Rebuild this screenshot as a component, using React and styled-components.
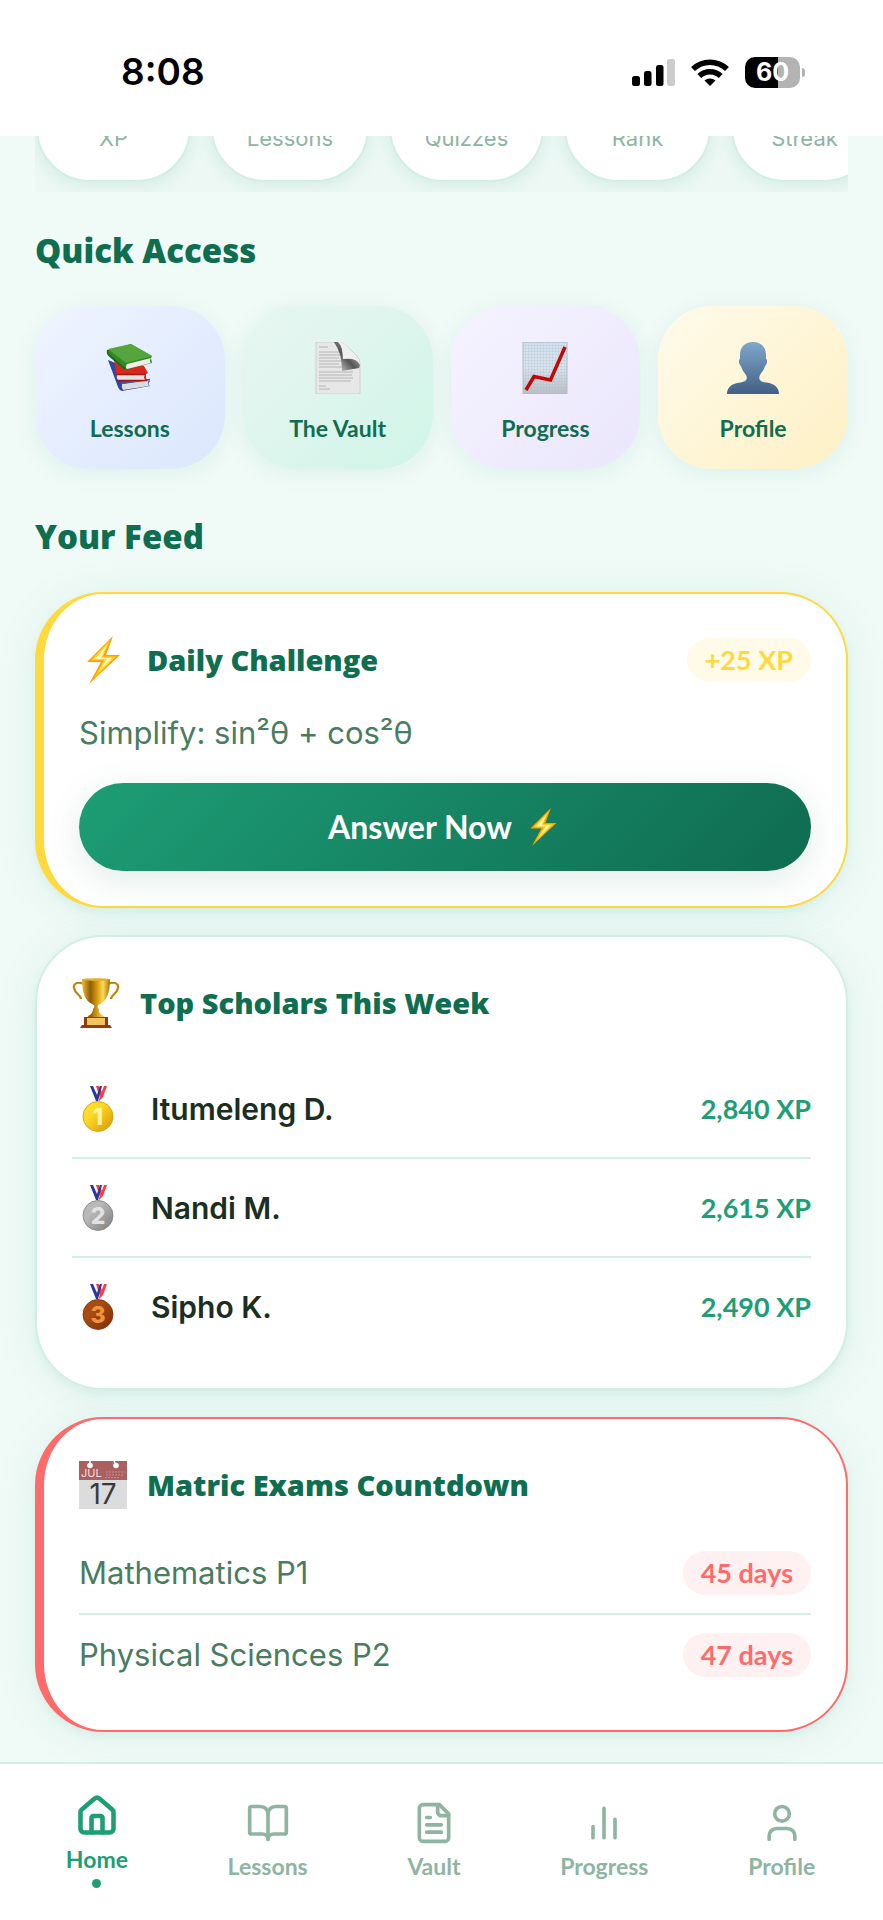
import React from "react";
import styled, { createGlobalStyle, css } from "styled-components";

const c = {
  deep: "#0f6e50",
  green: "#1d9e75",
  muted: "#8fb5a2",
  body: "#4a7c5f",
  ink: "#1a2e22",
  line: "#d2efe5",
  page: "#f0faf7",
  gold: "#ffd93d",
  coral: "#ff6b6b",
};
const display = `"Open Sans", Lato, sans-serif`;
const round = `Lato, "Open Sans", sans-serif`;
const plain = `Inter, "Liberation Sans", sans-serif`;

const Global = createGlobalStyle`
  *, *::before, *::after { box-sizing: border-box; }
  body { margin: 0; background: ${c.page}; font-family: ${plain}; }
  h2, h3, p, ul, ol { margin: 0; padding: 0; }
  ul, ol { list-style: none; }
  svg { display: block; flex: none; }
`;

const Screen = styled.div`
  display: flex;
  flex-direction: column;
  min-height: 100vh;
`;

const StatusBar = styled.header`
  display: flex;
  align-items: center;
  justify-content: space-between;
  height: 136px;
  padding: 8px 78px 0 121px;
  background: #fff;
`;
const Clock = styled.time`
  font-size: 37px;
  line-height: 48px;
  font-weight: 600;
  color: #000;
`;
const StatusIcons = styled.div`
  display: flex;
  align-items: center;
  gap: 16px;
`;
const Battery = styled.div`
  display: flex;
  align-items: center;
  gap: 2px;
  &::after {
    content: "";
    width: 3px;
    height: 9px;
    border-radius: 0 4px 4px 0;
    background: #b3b3b3;
  }
`;
const BatteryLevel = styled.span`
  width: 55px;
  height: 31px;
  border-radius: 10px;
  background: linear-gradient(90deg, #000 60%, #b3b3b3 60%);
  color: #fff;
  font-size: 25px;
  line-height: 31px;
  font-weight: 700;
  text-align: center;
`;

const Content = styled.main`
  flex: 1;
  padding: 0 35px 30px;
`;

const Stats = styled.ul`
  display: flex;
  align-items: flex-end;
  gap: 20px;
  height: 56px;
  padding: 0 0 10px 1px;
  overflow: hidden;
  background: #edf8f5;
`;
const StatChip = styled.li`
  flex: none;
  width: ${(p) => p.$width}px;
  height: 128px;
  padding: 70px 0 0;
  border: 2px solid ${c.line};
  border-radius: 54px;
  background: #fff;
  box-shadow: 0 4px 18px rgba(29, 158, 117, 0.12);
  color: ${c.muted};
  font-size: 22px;
  line-height: 24px;
  text-align: center;
`;

const SectionTitle = styled.h2`
  padding: ${(p) => (p.$first ? "35px" : "44px")} 0 31px;
  color: ${c.deep};
  font: 800 33px/48px ${display};
`;

const QuickGrid = styled.nav`
  display: grid;
  grid-template-columns: repeat(4, 1fr);
  gap: 18px;
`;
const QuickCard = styled.a`
  display: flex;
  flex-direction: column;
  align-items: center;
  gap: 20px;
  height: 163px;
  padding-top: 36px;
  border-radius: 54px;
  background: linear-gradient(135deg, ${(p) => p.$from}, ${(p) => p.$to});
  box-shadow: 0 4px 22px rgba(29, 158, 117, 0.09);
  color: ${c.deep};
  font: 700 23px/28px ${round};
  text-decoration: none;
`;

const Feed = styled.div`
  display: flex;
  flex-direction: column;
  gap: 27px;
`;
const Card = styled.section`
  padding: 35px;
  border: 2px solid ${(p) => p.$accent || c.line};
  border-left-width: ${(p) => (p.$accent ? 9 : 2)}px;
  border-radius: 68px;
  background: #fff;
  box-shadow: 0 4px 45px rgba(29, 158, 117, 0.08), 0 4px 9px rgba(29, 158, 117, 0.07);
`;
const CardHead = styled.div`
  display: flex;
  align-items: center;
  gap: 20px;
  height: 62px;
  margin-bottom: ${(p) => p.$space || 17}px;
`;
const CardTitle = styled.h3`
  flex: 1;
  color: ${c.deep};
  font: 800 29px/42px ${display};
`;
const Pill = styled.span`
  padding: 0 18px;
  border-radius: 22px;
  font: 700 27px/44px ${round};
  white-space: nowrap;
  ${(p) =>
    p.$tone === "gold"
      ? css`
          background: #fffbe8;
          color: ${c.gold};
        `
      : css`
          background: #fff1f1;
          color: ${c.coral};
        `}
`;
const Question = styled.p`
  color: ${c.body};
  font-size: 31px;
  line-height: 50px;
`;
const AnswerButton = styled.button`
  display: flex;
  align-items: center;
  justify-content: center;
  gap: 12px;
  width: 100%;
  height: 88px;
  margin-top: 25px;
  border: 0;
  border-radius: 44px;
  background: linear-gradient(135deg, ${c.green}, #0f6b50);
  box-shadow: 0 9px 36px rgba(15, 110, 80, 0.13);
  color: #fff;
  font: 700 32px/42px ${round};
`;

const ScholarRow = styled.li`
  display: flex;
  align-items: center;
  height: 99px;
  border-bottom: 2px solid ${c.line};
  &:last-child {
    height: 97px;
    margin-bottom: -2px;
    border: 0;
  }
`;
const Medal = styled.span`
  display: flex;
  justify-content: center;
  width: 52px;
  margin-right: 27px;
`;
const ScholarName = styled.span`
  flex: 1;
  color: ${c.ink};
  font-size: 30px;
  line-height: 48px;
  font-weight: 600;
`;
const ScholarXp = styled.span`
  color: ${c.green};
  font: 700 27px/36px ${round};
`;

const ExamRow = styled.li`
  display: flex;
  align-items: center;
  justify-content: space-between;
  padding: 18px 0;
  border-bottom: 2px solid ${c.line};
  color: ${c.body};
  font-size: 31px;
  line-height: 44px;
  &:last-child {
    border: 0;
  }
`;

const TabBar = styled.nav`
  display: flex;
  align-items: center;
  justify-content: space-around;
  height: 158px;
  padding: 0 18px 3px 16px;
  border-top: 2px solid ${c.line};
  background: #fff;
`;
const Tab = styled.a`
  display: flex;
  flex-direction: column;
  align-items: center;
  color: ${(p) => (p.$active ? c.green : c.muted)};
  font: 700 23px/28px ${round};
  text-decoration: none;
  svg {
    margin-bottom: 7px;
  }
  &::after {
    content: "";
    display: ${(p) => (p.$active ? "block" : "none")};
    width: 9px;
    height: 9px;
    margin-top: 6px;
    border-radius: 50%;
    background: currentColor;
  }
`;

const Signal = () => (
  <svg width="43" height="27" viewBox="0 0 43 27" aria-hidden="true">
    <rect x="0" y="17" width="8" height="10" rx="2.5" />
    <rect x="12" y="12" width="7.500" height="15" rx="2.500" />
    <rect x="24" y="6" width="7.500" height="21" rx="2.500" />
    <rect x="35" y="0" width="8" height="27" rx="2.500" fill="#ccc" />
  </svg>
);
const Wifi = () => (
  <svg width="38" height="27" viewBox="0 0 38 27" fill="none" stroke="#000" strokeWidth="5.500" aria-hidden="true">
    <path d="M2 10a24.500 24.500 0 0 1 34 0" />
    <path d="M8.300 17a15.500 15.500 0 0 1 21.400 0" />
    <path d="M19 27l-5.500-5.400a8 8 0 0 1 11 0z" fill="#000" stroke="none" />
  </svg>
);

const Books = () => (
  <svg width="52" height="52" viewBox="0 0 52 52" aria-hidden="true">
    <path d="M4 18l5 2 34 17 3 2q-3 3 0 5l-28 5q-3-1-4-4z" fill="#2b47a5" />
    <path d="M18 42l27-4q-2 3 0 6l-26 4q-2-3-1-6z" fill="#dcdcdc" />
    <path d="M17 41.500l29-4" stroke="#3d5cc0" strokeWidth="1.500" />
    <path d="M10 18l6-2 24 8 4 7-2 1v6H16q-4-3-4-6z" fill="#d8271c" />
    <path d="M13 33h28q-2 2 0 5H14q-2-2-1-5z" fill="#e4e2dc" />
    <path d="M13 38.500h30M12 32.500h30" stroke="#a91610" strokeWidth="1.500" />
    <path d="M4 8L27 2l21 12-1 2 1 5-27 7L5 13z" fill="#2f8a24" />
    <path d="M4 7l23-5 21 12-26 7z" fill="#54a53c" />
    <path d="M23 22l24-6q-2 3 0 5l-24 6q-2-2 0-5z" fill="#eeeeea" />
    <path d="M4 8q-1 4 2 6l15 13" stroke="#1e681a" strokeWidth="2" fill="none" />
  </svg>
);
const Page = () => (
  <svg width="52" height="52" viewBox="0 0 52 52" aria-hidden="true">
    <defs>
      <linearGradient id="curl" x1="0" y1="1" x2="1" y2="0">
        <stop offset="0" stopColor="#e4e4e4" />
        <stop offset=".45" stopColor="#555" />
        <stop offset=".7" stopColor="#999" />
        <stop offset="1" stopColor="#ccc" />
      </linearGradient>
    </defs>
    <path d="M4 0h22q6 1 9 4l10 10q3 3 3 8v30H4z" fill="#e7e7e7" stroke="#cfcfcf" />
    <path d="M7 5h9M7 10h20M7 13h21M7 16h20M7 19h22M7 22h20M7 25h23M7 30h34M7 33h33M7 36h34M7 39h32M7 44h7M7 47h11" stroke="#b4b4b4" strokeWidth="1" />
    <path d="M22 0h4q5 3 5 17 13-2 17 6l-1 3-17 3q0-18-8-29z" fill="url(#curl)" />
    <path d="M26 0q5 4 5 17 13-2 17 5-1-5-4-8L35 4q-4-4-9-4z" fill="#efefef" />
  </svg>
);
const Chart = () => (
  <svg width="52" height="52" viewBox="0 0 52 52" aria-hidden="true">
    <defs>
      <linearGradient id="paper" x1="0" y1="0" x2="0" y2="1">
        <stop offset="0" stopColor="#d4e2ee" />
        <stop offset=".5" stopColor="#d8e3ec" />
        <stop offset="1" stopColor="#bcbfc2" />
      </linearGradient>
      <pattern id="grid" width="3" height="3" patternUnits="userSpaceOnUse">
        <path d="M0 0h3M0 0v3" stroke="#a9bccd" strokeWidth=".5" />
      </pattern>
    </defs>
    <path d="M4 0h44v52H4z" fill="url(#paper)" />
    <path d="M4 0h44v52H4z" fill="url(#grid)" stroke="#aebccb" />
    <path d="M7 48l8-13.500L31.500 38 46 5" fill="none" stroke="#c00808" strokeWidth="3.500" />
  </svg>
);
const Bust = () => (
  <svg width="52" height="52" viewBox="0 0 52 52" aria-hidden="true">
    <defs>
      <linearGradient id="bust" x1="0" y1="0" x2="0" y2="1">
        <stop offset="0" stopColor="#7fa8ca" />
        <stop offset="1" stopColor="#416084" />
      </linearGradient>
    </defs>
    <path d="M26 0c8 0 13 5 13 13v4c2 0 1 6-1 7-1 4-3 6-5 9-1 2-1 4 0 5 2 3 8 2 12 4 5 2 7 6 7 10H0c0-4 2-8 7-10 4-2 10-1 12-4 1-1 1-3 0-5-2-3-4-5-5-9-2-1-3-7-1-7v-4C13 5 18 0 26 0z" fill="url(#bust)" />
  </svg>
);
const Bolt = ({ size }) => (
  <svg width={size} height={size} viewBox="0 0 48 48" aria-hidden="true">
    <path d="M34 0L8 26h14L10 48l31-29H27z" fill="#ff9d0a" />
    <path d="M31 4L12 24.300h13L15 42l22-21.500H24z" fill="#ffd91c" />
    <path d="M28 9L16 23h12l-8 12 13-13H22z" fill="#fff7c4" />
  </svg>
);
const Trophy = () => (
  <svg width="48" height="50" viewBox="0 0 48 50" aria-hidden="true">
    <defs>
      <linearGradient id="cup">
        <stop offset="0" stopColor="#f0bd35" />
        <stop offset=".3" stopColor="#8f5d05" />
        <stop offset=".55" stopColor="#d99e12" />
        <stop offset=".75" stopColor="#ffdb55" />
        <stop offset="1" stopColor="#a87005" />
      </linearGradient>
    </defs>
    <path d="M12 6C5 3 1 6 2 10c1 6 7 7 7 11M36 6c7-3 11 0 10 4-1 6-7 7-7 11" fill="none" stroke="#bd840f" strokeWidth="2.200" />
    <path d="M10 1h28c0 13-3 22-10 25-3 1-3 3-1 5-1 3 1 5 5 7v2H16v-2q5-2 5-7c2-2 2-4-1-5C13 23 10 14 10 1z" fill="url(#cup)" />
    <ellipse cx="24" cy="1.600" rx="14" ry="1.400" fill="#e4ae29" />
    <path d="M12 39h24v8H12z" fill="#8d3c0c" />
    <path d="M15 40h18v7H15z" fill="#f0c65c" />
    <path d="M10 47h28l2 3H8z" fill="#953b0b" />
  </svg>
);

const medalTones = {
  1: ["#ffdc25", "#d69500", "#fff3a6"],
  2: ["#b9b9b9", "#7d7d7d", "#e2e2e2"],
  3: ["#a84c12", "#7c2d05", "#f0933e"],
};
const MedalArt = ({ place }) => {
  const [light, dark, digit] = medalTones[place];
  return (
    <svg width="32" height="46" viewBox="0 0 32 46" role="img" aria-label={`Place ${place}`}>
      <defs>
        <linearGradient id={`medal${place}`} x1="0" y1="0" x2="1" y2="1">
          <stop offset="0" stopColor={light} />
          <stop offset=".35" stopColor={light} />
          <stop offset="1" stopColor={dark} />
        </linearGradient>
      </defs>
      <path d="M14 0h9l-5 14h-4z" fill="#eef0fa" />
      <path d="M14 0h3l3 6-2 6z" fill="#ef4048" />
      <path d="M8 0h3l4 9 3-9h2l-4 15h-2z" fill="#28389a" />
      <path d="M22 0h3l-4 11-5 5z" fill="#ff3b42" />
      <circle cx="16" cy="30.500" r="15" fill={`url(#medal${place})`} stroke={dark} strokeWidth=".8" />
      <text x="16" y="38.500" textAnchor="middle" fontFamily="Inter, sans-serif" fontWeight="800" fontSize="23" fill={digit}>
        {place}
      </text>
    </svg>
  );
};
const Calendar = () => (
  <svg width="48" height="48" viewBox="0 0 48 48" role="img" aria-label="July 17">
    <path d="M0 0h48v48H0z" fill="#dcdcdc" />
    <path d="M0 0h48v19H0z" fill="#ab5f60" />
    <path d="M11 0v4M35 0l2 4" stroke="#fff" strokeWidth="1.500" />
    <circle cx="11" cy="4.500" r="2.800" fill="#fff" />
    <circle cx="37" cy="4.500" r="2.800" fill="#fff" />
    <path d="M27 11h19M27 14h18M26 16.500h14" stroke="#c98d8d" strokeDasharray="2 1" />
    <text x="2" y="16" fontFamily="Inter, sans-serif" fontSize="11" fill="#f3dede">JUL</text>
    <text x="24" y="43" textAnchor="middle" fontFamily="Inter, sans-serif" fontWeight="400" fontSize="28" fill="#3a3a3a">17</text>
  </svg>
);

const tabPaths = {
  Home: ["M15 21v-8a1 1 0 0 0-1-1h-4a1 1 0 0 0-1 1v8", "M3 10a2 2 0 0 1 .709-1.528l7-5.999a2 2 0 0 1 2.582 0l7 5.999A2 2 0 0 1 21 10v9a2 2 0 0 1-2 2H5a2 2 0 0 1-2-2z"],
  Lessons: ["M12 7v14", "M3 18a1 1 0 0 1-1-1V4a1 1 0 0 1 1-1h5a4 4 0 0 1 4 4 4 4 0 0 1 4-4h5a1 1 0 0 1 1 1v13a1 1 0 0 1-1 1h-6a3 3 0 0 0-3 3 3 3 0 0 0-3-3z"],
  Vault: ["M15 2H6a2 2 0 0 0-2 2v16a2 2 0 0 0 2 2h12a2 2 0 0 0 2-2V7Z", "M14 2v4a2 2 0 0 0 2 2h4", "M10 9H8M16 13H8M16 17H8"],
  Progress: ["M18 20V10M12 20V4M6 20v-6"],
  Profile: ["M19 21v-2a4 4 0 0 0-4-4H9a4 4 0 0 0-4 4v2", "M16 7a4 4 0 1 1-8 0 4 4 0 0 1 8 0z"],
};
const TabIcon = ({ name, active }) => (
  <svg width="44" height="44" viewBox="0 0 24 24" fill="none" stroke="currentColor" strokeWidth={active ? 2.5 : 2} strokeLinecap="round" strokeLinejoin="round" aria-hidden="true">
    {tabPaths[name].map((d) => (
      <path key={d} d={d} />
    ))}
  </svg>
);

const stats = [["XP", 155], ["Lessons", 158], ["Quizzes", 155], ["Rank", 147], ["Streak", 147]];
const quick = [
  ["Lessons", "#eff4ff", "#dae7fd", Books],
  ["The Vault", "#e8f6f1", "#d1f5e8", Page],
  ["Progress", "#f5f3ff", "#ebe6fc", Chart],
  ["Profile", "#fffbeb", "#fdf0c4", Bust],
];
const scholars = [["Itumeleng D.", "2,840 XP"], ["Nandi M.", "2,615 XP"], ["Sipho K.", "2,490 XP"]];
const exams = [["Mathematics P1", "45 days"], ["Physical Sciences P2", "47 days"]];

export default function App() {
  return (
    <Screen>
      <Global />
      <StatusBar>
        <Clock>8:08</Clock>
        <StatusIcons>
          <Signal />
          <Wifi />
          <Battery>
            <BatteryLevel>60</BatteryLevel>
          </Battery>
        </StatusIcons>
      </StatusBar>
      <Content>
        <Stats>
          {stats.map(([label, width]) => (
            <StatChip key={label} $width={width}>{label}</StatChip>
          ))}
        </Stats>
        <SectionTitle $first>Quick Access</SectionTitle>
        <QuickGrid>
          {quick.map(([label, from, to, Art]) => (
            <QuickCard key={label} href="#" $from={from} $to={to}>
              <Art />
              {label}
            </QuickCard>
          ))}
        </QuickGrid>
        <SectionTitle>Your Feed</SectionTitle>
        <Feed>
          <Card $accent={c.gold}>
            <CardHead>
              <Bolt size={48} />
              <CardTitle>Daily Challenge</CardTitle>
              <Pill $tone="gold">+25 XP</Pill>
            </CardHead>
            <Question>Simplify: sin²θ + cos²θ</Question>
            <AnswerButton type="button">
              Answer Now
              <Bolt size={38} />
            </AnswerButton>
          </Card>
          <Card>
            <CardHead $space={26}>
              <Trophy />
              <CardTitle>Top Scholars This Week</CardTitle>
            </CardHead>
            <ol>
              {scholars.map(([name, xp], i) => (
                <ScholarRow key={name}>
                  <Medal>
                    <MedalArt place={i + 1} />
                  </Medal>
                  <ScholarName>{name}</ScholarName>
                  <ScholarXp>{xp}</ScholarXp>
                </ScholarRow>
              ))}
            </ol>
          </Card>
          <Card $accent={c.coral}>
            <CardHead>
              <Calendar />
              <CardTitle>Matric Exams Countdown</CardTitle>
            </CardHead>
            <ul>
              {exams.map(([name, left]) => (
                <ExamRow key={name}>
                  {name}
                  <Pill>{left}</Pill>
                </ExamRow>
              ))}
            </ul>
          </Card>
        </Feed>
      </Content>
      <TabBar>
        {Object.keys(tabPaths).map((name) => (
          <Tab key={name} href="#" $active={name === "Home"}>
            <TabIcon name={name} active={name === "Home"} />
            {name}
          </Tab>
        ))}
      </TabBar>
    </Screen>
  );
}
